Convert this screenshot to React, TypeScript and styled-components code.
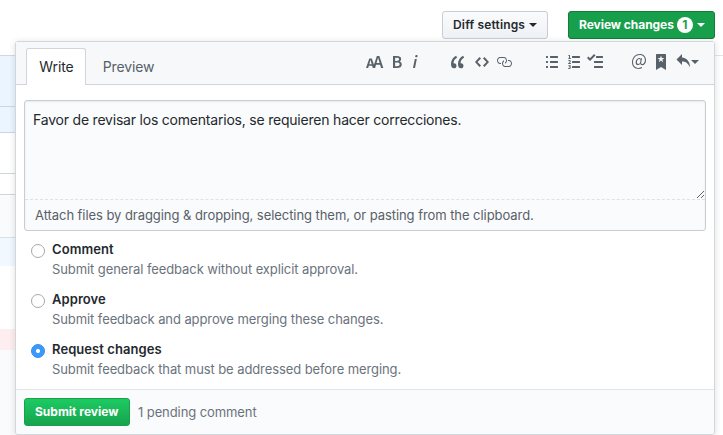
import React from 'react';
import styled, { createGlobalStyle } from 'styled-components';

const Global = createGlobalStyle`
  *, *::before, *::after { box-sizing: border-box; }
  body { margin: 0; background: #fff; overflow: hidden; }
  body, button, textarea { font-family: Inter, "Liberation Sans", sans-serif; }
`;

const Page = styled.div`
  width: 723px;
  height: 435px;
  overflow: hidden;
  color: #24292e;
  display: grid;
  grid-template-rows: 41px 394px;
`;

const TopBar = styled.header`
  display: flex;
  justify-content: flex-end;
  gap: 20px;
  padding: 11px 8px 0 0;
`;

const Button = styled.button<{ $kind?: 'default' | 'primary' | 'selected'; $w: number; $track?: number }>`
  display: flex;
  align-items: center;
  width: ${p => p.$w}px;
  height: 28px;
  padding: 0 0 0 10px;
  border-radius: 3px;
  font-size: 12px;
  line-height: 20px;
  white-space: nowrap;
  letter-spacing: ${p => p.$track ?? 0}px;
  font-weight: ${p => (p.$kind ? 700 : 600)};
  color: ${p => (p.$kind ? '#fff' : '#24292e')};
  border: 1px solid ${p => (p.$kind === 'selected' ? '#157a3c' : p.$kind === 'primary' ? '#1a9f4b' : '#c9cdd1')};
  background: ${p =>
    p.$kind === 'selected' ? '#189f4c'
    : p.$kind === 'primary' ? 'linear-gradient(#1ccb63, #17a34e)'
    : 'linear-gradient(#fafbfc, #eef1f5)'};
`;

const Caret = styled.span`
  flex: none;
  margin-left: 4px;
  border: 4px solid transparent;
  border-top-color: currentColor;
  border-bottom-width: 0;
`;

const Counter = styled.span`
  flex: none;
  width: 16px;
  height: 16px;
  margin-left: 3px;
  border-radius: 8px;
  background: #fff;
  color: #189f4c;
  font-size: 12px;
  line-height: 16px;
  text-align: center;
  letter-spacing: 0;
`;

const Body = styled.main`
  display: grid;
  grid-template-columns: 15px 700px 8px;
`;

const Gutter = styled.div`
  display: flex;
  flex-direction: column;
`;

const DiffRow = styled.div<{ $h: number; $bg?: string; $line?: string }>`
  flex: none;
  height: ${p => p.$h}px;
  background: ${p => p.$bg ?? '#fff'};
  border-bottom: ${p => (p.$line ? `1px solid ${p.$line}` : 'none')};
`;

const Panel = styled.section`
  position: relative;
  display: flex;
  flex-direction: column;
  border: 1px solid #d4d7da;
  border-radius: 3px;
  background: #fff;
  box-shadow: 0 1px 6px rgba(27, 31, 35, 0.15);
`;

const PanelHead = styled.div`
  flex: none;
  display: flex;
  height: 43px;
  padding: 6px 15px 0 10px;
  background: #f6f8fa;
  border-bottom: 1px solid #d1d5da;
`;

const Tab = styled.div<{ $active?: boolean }>`
  width: ${p => (p.$active ? 60 : 84)}px;
  height: 37px;
  padding-left: 1px;
  text-align: center;
  font-size: 14px;
  line-height: 35px;
  letter-spacing: ${p => (p.$active ? -0.1 : -0.15)}px;
  color: ${p => (p.$active ? '#24292e' : '#586069')};
  border: 1px solid ${p => (p.$active ? '#d1d5da' : 'transparent')};
  border-bottom: 0;
  border-radius: 3px 3px 0 0;
  background: ${p => (p.$active ? '#fff' : 'transparent')};
`;

const Toolbar = styled.div`
  display: flex;
  align-items: center;
  height: 28px;
  margin-left: auto;
  color: #586069;
  ${Caret} { margin-left: 1px; }
`;

const Tool = styled.span<{ $before?: number }>`
  display: flex;
  margin-left: ${p => p.$before ?? 10}px;
  svg { display: block; fill: currentColor; }
`;

const Editor = styled.div`
  flex: none;
  display: flex;
  flex-direction: column;
  width: 682px;
  height: 131px;
  margin: 15px 8px 0;
  border: 1px solid #c9ced3;
  border-radius: 3px;
  background: #fafbfc;
  box-shadow: inset 0 1px 2px rgba(27, 31, 35, 0.075);
`;

const TextArea = styled.textarea`
  display: block;
  flex: none;
  height: 99px;
  padding: 8px;
  border: 0;
  border-bottom: 1px dashed #dfe2e5;
  outline: none;
  resize: vertical;
  background: transparent;
  color: #24292e;
  font-size: 14px;
  line-height: 21px;
  letter-spacing: -0.21px;
`;

const AttachHint = styled.p`
  margin: 0;
  padding: 0 10px;
  font-size: 13px;
  line-height: 31px;
  letter-spacing: -0.06px;
  color: #586069;
`;

const Options = styled.div`
  flex: 1;
  padding: 8px 0 0 15px;
`;

const Option = styled.label`
  display: grid;
  grid-template-columns: 21px 1fr;
  height: 50px;
  line-height: 20px;
`;

const Radio = styled.input`
  appearance: none;
  width: 14px;
  height: 14px;
  margin: 5px 0 0;
  border: 1px solid #a9a9a9;
  border-radius: 50%;
  background: #fff;
  &:checked {
    border-color: #3189ed;
    background: radial-gradient(circle, #fff 1.6px, #3b99fc 2.4px);
  }
`;

const OptionName = styled.div`
  font-size: 13px;
  font-weight: 600;
  letter-spacing: 0.07px;
`;

const Note = styled.div`
  font-size: 13px;
  letter-spacing: -0.09px;
  color: #6a737d;
`;

const Footer = styled.footer`
  flex: none;
  display: flex;
  align-items: center;
  gap: 8px;
  height: 45px;
  padding-left: 8px;
  border-top: 1px solid #e1e4e8;
  border-radius: 0 0 3px 3px;
  background: #fafbfc;
`;

const icons = {
  size: [18, 'M13.62 9.08L12.1 3.66h-.06l-1.5 5.42h3.08zM5.7 10.13S4.68 6.52 4.53 6.02h-.08l-1.13 4.11H5.7zM17.31 14h-2.25l-.95-3.25h-4.07L9.09 14H6.84l-.69-2.33H2.87L2.17 14H0l3.3-9.59h2.5l2.17 6.34L10.86 2h2.52l3.94 12h-.01z'],
  bold: [10, 'M1 2h3.83c2.48 0 4.3.75 4.3 2.95 0 1.14-.63 2.23-1.67 2.61v.06c1.33.3 2.3 1.23 2.3 2.86 0 2.39-1.97 3.52-4.61 3.52H1V2zm3.66 4.95c1.67 0 2.38-.66 2.38-1.69 0-1.17-.78-1.61-2.34-1.61H3.13v3.3h1.53zm.27 5.39c1.77 0 2.75-.64 2.75-1.98 0-1.27-.95-1.81-2.75-1.81h-1.8v3.8h1.8v-.01z'],
  italic: [6, 'M2.81 5h1.98L3 14H1l1.81-9zm.36-2.7c0-.7.58-1.3 1.33-1.3.56 0 1.13.38 1.13 1.03 0 .75-.59 1.3-1.33 1.3-.58 0-1.13-.38-1.13-1.03z'],
  quote: [14, 'M6.16 3.5C3.73 5.06 2.55 6.67 2.55 9.36c.16-.05.3-.05.44-.05 1.27 0 2.5.86 2.5 2.41 0 1.61-1.03 2.61-2.5 2.61-1.9 0-2.99-1.52-2.99-4.25 0-3.8 1.75-6.53 5.02-8.42L6.16 3.5zm7 0c-2.43 1.56-3.61 3.17-3.61 5.86.16-.05.3-.05.44-.05 1.27 0 2.5.86 2.5 2.41 0 1.61-1.03 2.61-2.5 2.61-1.89 0-2.98-1.52-2.98-4.25 0-3.8 1.75-6.53 5.02-8.42l1.14 1.84h-.01z'],
  code: [14, 'M9.5 3L8 4.5 11.5 8 8 11.5 9.5 13 14 8 9.5 3zm-5 0L0 8l4.5 5L6 11.5 2.5 8 6 4.5 4.5 3z'],
  link: [16, 'M4 9h1v1H4c-1.5 0-3-1.69-3-3.5S2.55 3 4 3h4c1.45 0 3 1.69 3 3.5 0 1.41-.91 2.72-2 3.25V8.59c.58-.45 1-1.27 1-2.09C10 5.22 8.98 4 8 4H4c-.98 0-2 1.22-2 2.5S3 9 4 9zm9-3h-1v1h1c1 0 2 1.22 2 2.5S13.98 12 13 12H9c-.98 0-2-1.22-2-2.5 0-.83.42-1.64 1-2.09V6.25c-1.09.53-2 1.84-2 3.25C6 11.31 7.55 13 9 13h4c1.45 0 3-1.69 3-3.5S14.5 6 13 6z'],
  ul: [12, 'M2 13c0 .59 0 1-.59 1H.59C0 14 0 13.59 0 13c0-.59 0-1 .59-1h.81c.59 0 .59.41.59 1H2zm2.59-9h6.81c.59 0 .59-.41.59-1 0-.59 0-1-.59-1H4.59C4 2 4 2.41 4 3c0 .59 0 1 .59 1zM1.41 7H.59C0 7 0 7.41 0 8c0 .59 0 1 .59 1h.81c.59 0 .59-.41.59-1 0-.59 0-1-.59-1h.01zm0-5H.59C0 2 0 2.41 0 3c0 .59 0 1 .59 1h.81c.59 0 .59-.41.59-1 0-.59 0-1-.59-1h.01zm10 5H4.59C4 7 4 7.41 4 8c0 .59 0 1 .59 1h6.81c.59 0 .59-.41.59-1 0-.59 0-1-.59-1h.01zm0 5H4.59C4 12 4 12.41 4 13c0 .59 0 1 .59 1h6.81c.59 0 .59-.41.59-1 0-.59 0-1-.59-1h.01z'],
  ol: [12, 'M12 13c0 .59 0 1-.59 1H4.59C4 14 4 13.59 4 13c0-.59 0-1 .59-1h6.81c.59 0 .59.41.59 1H12zM4.59 4h6.81c.59 0 .59-.41.59-1 0-.59 0-1-.59-1H4.59C4 2 4 2.41 4 3c0 .59 0 1 .59 1zm6.81 3H4.59C4 7 4 7.41 4 8c0 .59 0 1 .59 1h6.81c.59 0 .59-.41.59-1 0-.59 0-1-.59-1zM2 1h-.72c-.3.19-.58.25-1.03.34V2H1v2.14H.16V5H3v-.86H2V1zm.25 8.13c-.17 0-.45.03-.66.06.53-.56 1.14-1.25 1.14-1.89C2.72 6.52 2.17 6 1.38 6 .83 6 .48 6.2.02 6.7l.58.58c.19-.19.38-.38.64-.38.28 0 .48.16.48.52 0 .53-.77 1.2-1.7 2.06V10h3l-.09-.88h-.66l-.02.01zm-.08 3.78v-.03c.44-.19.64-.47.64-.86 0-.7-.56-1.11-1.44-1.11-.48 0-.89.19-1.28.52l.55.64c.25-.2.44-.31.69-.31.27 0 .42.13.42.36 0 .27-.2.44-.86.44v.75c.83 0 .98.17.98.47 0 .25-.23.38-.58.38-.28 0-.56-.14-.81-.38l-.48.66c.3.36.77.56 1.41.56.83 0 1.53-.41 1.53-1.16 0-.5-.31-.81-.77-.94v.01z'],
  tasks: [16, 'M15.41 9H7.59C7 9 7 8.59 7 8c0-.59 0-1 .59-1h7.81c.59 0 .59.41.59 1 0 .59 0 1-.59 1h.01zM9.59 4C9 4 9 3.59 9 3c0-.59 0-1 .59-1h5.81c.59 0 .59.41.59 1 0 .59 0 1-.59 1H9.59zM0 3.91l1.41-1.3L3 4.2 7.09 0 8.5 1.41 3 6.91l-3-3zM7.59 12h7.81c.59 0 .59.41.59 1 0 .59 0 1-.59 1H7.59C7 14 7 13.59 7 13c0-.59 0-1 .59-1z'],
  mention: [14, 'M6.58 15c1.25 0 2.52-.31 3.56-.94l-.42-.94c-.84.52-1.89.83-3.03.83-3.23 0-5.64-2.08-5.64-5.72 0-4.37 3.23-7.18 6.58-7.18 3.45 0 5.22 2.19 5.22 5.2 0 2.39-1.34 3.86-2.5 3.86-1.05 0-1.36-.73-1.05-2.19l.73-3.75H8.98l-.11.72c-.41-.63-.94-.83-1.56-.83-2.19 0-3.66 2.39-3.66 4.38 0 1.67.94 2.61 2.3 2.61.84 0 1.67-.53 2.3-1.25.11.94.94 1.45 1.98 1.45 1.67 0 3.77-1.67 3.77-5C14 2.61 11.59 0 7.83 0 3.66 0 0 3.33 0 8.33 0 12.71 2.92 15 6.58 15zm-.31-5c-.73 0-1.36-.52-1.36-1.67 0-1.45.94-3.22 2.41-3.22.52 0 .84.2 1.25.83l-.52 3.02c-.63.73-1.25 1.05-1.78 1.05V10z'],
  bookmark: [10, 'M9 0H1C.27 0 0 .27 0 1v15l5-3.09L10 16V1c0-.73-.27-1-1-1zm-.78 4.25L6.36 5.61l.72 2.16c.06.22-.02.28-.2.17L5 6.6 3.12 7.94c-.19.11-.25.05-.2-.17l.72-2.16-1.86-1.36c-.17-.16-.14-.23.09-.23l2.3-.03.7-2.16h.25l.7 2.16 2.3.03c.23 0 .27.08.09.23h.01z'],
  reply: [14, 'M6 3.5c3.92.44 8 3.125 8 10-2.312-5.062-4.75-6-8-6V11L.5 5.5 6 0v3.5z'],
} as const;

type IconName = keyof typeof icons;

function Icon({ name }: { name: IconName }) {
  const [w, d] = icons[name];
  return (
    <svg width={w} height={16} viewBox={`0 0 ${w} 16`} aria-hidden="true">
      <path fillRule="evenodd" d={d} />
    </svg>
  );
}

const tools: { name: IconName; before?: number }[] = [
  { name: 'size' }, { name: 'bold', before: 8 }, { name: 'italic' },
  { name: 'quote', before: 33 }, { name: 'code' }, { name: 'link', before: 7 },
  { name: 'ul', before: 34 }, { name: 'ol' }, { name: 'tasks', before: 7 },
  { name: 'mention', before: 29 }, { name: 'bookmark' }, { name: 'reply' },
];

const choices = [
  { name: 'Comment', note: 'Submit general feedback without explicit approval.' },
  { name: 'Approve', note: 'Submit feedback and approve merging these changes.' },
  { name: 'Request changes', note: 'Submit feedback that must be addressed before merging.' },
];

export default function App() {
  return (
    <Page>
      <Global />
      <TopBar>
        <Button $w={106} $track={0.16}>Diff settings<Caret /></Button>
        <Button $w={147} $kind="selected" $track={-0.05}>Review changes<Counter>1</Counter><Caret /></Button>
      </TopBar>
      <Body>
        <Gutter>
          <DiffRow $h={15} $line="#d1d8de" />
          <DiffRow $h={51} $bg="#eaf5ff" $line="#c8d7e4" />
          <DiffRow $h={26} $bg="#eaf5ff" $line="#c8d7e4" />
          <DiffRow $h={41} $line="#d1d5da" />
          <DiffRow $h={21} $line="#d1d5da" />
          <DiffRow $h={43} $bg="#fafbfc" $line="#d9e0e7" />
          <DiffRow $h={28} $bg="#f1f8ff" />
          <DiffRow $h={63} />
          <DiffRow $h={21} $bg="#ffeef0" />
          <DiffRow $h={85} $bg="#fafbfc" />
        </Gutter>
        <Panel>
          <PanelHead>
            <Tab $active>Write</Tab>
            <Tab>Preview</Tab>
            <Toolbar>
              {tools.map(t => <Tool key={t.name} $before={t.before}><Icon name={t.name} /></Tool>)}
              <Caret />
            </Toolbar>
          </PanelHead>
          <Editor>
            <TextArea defaultValue="Favor de revisar los comentarios, se requieren hacer correcciones." />
            <AttachHint>Attach files by dragging &amp; dropping, selecting them, or pasting from the clipboard.</AttachHint>
          </Editor>
          <Options>
            {choices.map((c, i) => (
              <Option key={c.name}>
                <Radio type="radio" name="verdict" defaultChecked={i === 2} />
                <div>
                  <OptionName>{c.name}</OptionName>
                  <Note>{c.note}</Note>
                </div>
              </Option>
            ))}
          </Options>
          <Footer>
            <Button $w={106} $kind="primary">Submit review</Button>
            <Note>1 pending comment</Note>
          </Footer>
        </Panel>
        <Gutter>
          <DiffRow $h={15} $line="#e1e4e8" />
        </Gutter>
      </Body>
    </Page>
  );
}
